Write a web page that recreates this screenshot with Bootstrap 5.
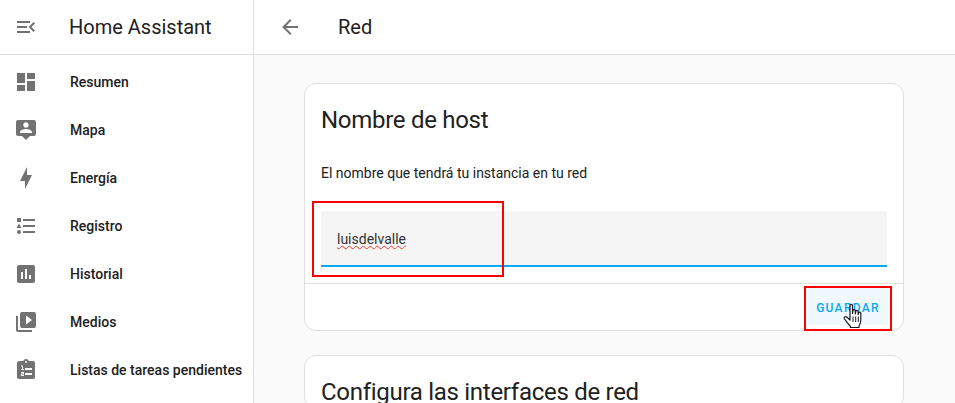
<!DOCTYPE html>
<html lang="es">
  <head>
    <meta charset="UTF-8" />
    <meta name="viewport" content="width=device-width, initial-scale=1.0" />
    <title>Red - Home Assistant</title>
    <link
      href="https://cdn.jsdelivr.net/npm/bootstrap@5.3.0/dist/css/bootstrap.min.css"
      rel="stylesheet"
    />
    <style>
      html,
      body {
        height: 100%;
        overflow: hidden;
      }
      body {
        font-family: Roboto, "Liberation Sans", sans-serif;
        color: #212121;
        background-color: #fafafa;
      }
      .ha-sidebar {
        width: 254px;
        background-color: #fff;
        border-right: 1px solid #e0e0e0;
      }
      .ha-head {
        height: 55px;
        background-color: #fff;
        border-bottom: 1px solid #e0e0e0;
      }
      .ha-head svg {
        width: 24px;
        height: 24px;
        fill: #727272;
      }
      .ha-brand {
        font-size: 20px;
        margin-left: 31px;
      }
      .ha-page-title {
        font-size: 20px;
        margin-left: 36px;
      }
      .ha-nav {
        padding-top: 3px;
      }
      .ha-nav a {
        height: 48px;
        padding-left: 14px;
        color: #212121;
        font-size: 14px;
        font-weight: 500;
        text-decoration: none;
      }
      .ha-nav svg {
        width: 24px;
        height: 24px;
        margin-right: 32px;
        fill: #727272;
      }
      .ha-main {
        padding: 28px 51px 0 50px;
      }
      .ha-card {
        width: 600px;
        border: 1px solid #e0e0e0;
        border-radius: 12px;
        background-color: #fff;
        margin-bottom: 24px;
      }
      .ha-card-title {
        font-size: 24px;
        font-weight: 400;
        letter-spacing: -0.012em;
        line-height: 32px;
        margin: 0;
        padding: 20px 16px 0;
      }
      .ha-desc {
        font-size: 14px;
        line-height: 20px;
        padding: 0 16px;
        margin: 27px 0 28px;
      }
      .ha-field {
        height: 56px;
        margin: 0 16px 16px;
        padding-left: 16px;
        padding-top: 18px;
        font-size: 14px;
        color: #333;
        background-color: #f5f5f5;
        border-bottom: 2px solid #03a9f4;
        border-radius: 4px 4px 0 0;
      }
      .ha-typo {
        text-decoration: underline wavy #e53935 1px;
        text-underline-offset: 1px;
      }
      .ha-actions {
        height: 47px;
        border-top: 1px solid #e0e0e0;
        padding: 4px 14px 0 0;
      }
      .ha-save {
        width: 82px;
        height: 37px;
        padding: 2px 0 0;
        border: 0;
        border-radius: 4px;
        background-color: #f0f9fe;
        color: #03a9f4;
        font-size: 12px;
        font-weight: 500;
        letter-spacing: 1.3px;
      }
      .ha-mark {
        border: 2px solid #f00;
        pointer-events: none;
      }
      .ha-mark-field {
        left: 7px;
        top: 117px;
        width: 192px;
        height: 76px;
      }
      .ha-mark-save {
        left: 499px;
        top: 202px;
        width: 88px;
        height: 45px;
      }
      .ha-cursor {
        left: 538px;
        top: 219px;
        width: 22px;
        height: 26px;
      }
    </style>
  </head>
  <body>
    <div class="d-flex h-100">
      <!-- Sidebar -->
      <nav class="ha-sidebar flex-shrink-0">
        <div class="ha-head d-flex align-items-center ps-3 pe-3">
          <svg class="flex-shrink-0" viewBox="0 0 24 24" style="margin-left: -2px"><path d="M21,15.61L19.59,17L14.58,12L19.59,7L21,8.39L17.44,12L21,15.61M3,6H16V8H3V6M3,13V11H13V13H3M3,18V16H16V18H3Z" /></svg>
          <span class="ha-brand">Home Assistant</span>
        </div>
        <div class="ha-nav d-flex flex-column">
          <a href="#" class="d-flex align-items-center">
            <svg viewBox="0 0 24 24"><path d="M13,3V9H21V3M13,21H21V11H13M3,21H11V15H3M3,13H11V3H3V13Z" /></svg>
            Resumen
          </a>
          <a href="#" class="d-flex align-items-center">
            <svg viewBox="0 0 24 24"><path d="M20 2H4C2.9 2 2 2.9 2 4V16C2 17.11 2.9 18 4 18H8L12 22L16 18H20C21.11 18 22 17.11 22 16V4C22 2.9 21.11 2 20 2M12 4.3C13.5 4.3 14.7 5.5 14.7 7C14.7 8.5 13.5 9.7 12 9.7C10.5 9.7 9.3 8.5 9.3 7C9.3 5.5 10.5 4.3 12 4.3M18 15H6V14.1C6 12.1 10 11 12 11C14 11 18 12.1 18 14.1V15Z" /></svg>
            Mapa
          </a>
          <a href="#" class="d-flex align-items-center">
            <svg viewBox="0 0 24 24"><path d="M11 15H6L13 1V9H18L11 23V15Z" /></svg>
            Energía
          </a>
          <a href="#" class="d-flex align-items-center">
            <svg viewBox="0 0 24 24"><path d="M5,9.5L7.5,14H2.5L5,9.5M3,4H7V8H3V4M5,20A2,2 0 0,0 7,18A2,2 0 0,0 5,16A2,2 0 0,0 3,18A2,2 0 0,0 5,20M9,5V7H21V5H9M9,19H21V17H9V19M9,13H21V11H9V13Z" /></svg>
            Registro
          </a>
          <a href="#" class="d-flex align-items-center">
            <svg viewBox="0 0 24 24"><path d="M19 3H5C3.9 3 3 3.9 3 5V19C3 20.1 3.9 21 5 21H19C20.1 21 21 20.1 21 19V5C21 3.9 20.1 3 19 3M9 17H7V10H9V17M13 17H11V7H13V17M17 17H15V13H17V17Z" /></svg>
            Historial
          </a>
          <a href="#" class="d-flex align-items-center">
            <svg viewBox="0 0 24 24"><path d="M4,6H2V20A2,2 0 0,0 4,22H18V20H4V6M20,2H8A2,2 0 0,0 6,4V16A2,2 0 0,0 8,18H20A2,2 0 0,0 22,16V4A2,2 0 0,0 20,2M12,14.5V5.5L18,10L12,14.5Z" /></svg>
            Medios
          </a>
          <a href="#" class="d-flex align-items-center">
            <svg viewBox="0 0 24 24"><path fill-rule="evenodd" d="M19,3A2,2 0 0,1 21,5V19A2,2 0 0,1 19,21H5A2,2 0 0,1 3,19V5A2,2 0 0,1 5,3H9.18C9.6,1.84 10.7,1 12,1C13.3,1 14.4,1.84 14.82,3H19M12,3A1,1 0 0,0 11,4A1,1 0 0,0 12,5A1,1 0 0,0 13,4A1,1 0 0,0 12,3M11,10V12H18V10H11M11,15V17H18V15H11M7,7.5V8.5H8V11H7V12H10V11H9V7.5H7M7,14V15H9V15.5H7V18H10V17H8V16.5H10V14H7Z" /></svg>
            Listas de tareas pendientes
          </a>
        </div>
      </nav>

      <!-- Main -->
      <div class="flex-grow-1 d-flex flex-column">
        <header class="ha-head d-flex align-items-center ps-4 flex-shrink-0">
          <svg class="flex-shrink-0" viewBox="0 0 24 24"><path d="M20,11V13H8L13.5,18.5L12.08,19.92L4.16,12L12.08,4.08L13.5,5.5L8,11H20Z" /></svg>
          <span class="ha-page-title">Red</span>
        </header>
        <main class="ha-main">
          <section class="ha-card position-relative">
            <h1 class="ha-card-title">Nombre de host</h1>
            <p class="ha-desc">El nombre que tendrá tu instancia en tu red</p>
            <div class="ha-field"><span class="ha-typo">luisdelvalle</span></div>
            <div class="ha-actions d-flex justify-content-end">
              <button type="button" class="ha-save">GUARDAR</button>
            </div>
            <!-- Annotations drawn over the screenshot -->
            <div class="ha-mark ha-mark-field position-absolute"></div>
            <div class="ha-mark ha-mark-save position-absolute"></div>
            <svg class="ha-cursor position-absolute" viewBox="0 0 22 26">
              <path
                d="M7 2.500C7 1 9.500 1 9.500 2.500V10.500L10 7.500C10.300 6.200 12.300 6.400 12.300 7.800V11L12.800 8.300C13.200 7 15.100 7.300 15.100 8.700V11.500L15.600 9.800C16 8.600 17.800 9 17.800 10.300V17C17.800 20 16.800 21.500 16 23V24.500H7.500V23.500C5.500 21.500 3.500 18.500 1.500 16C0.500 14.500 2.500 13 4 14.200L7 17V2.500Z"
                fill="#fff"
                stroke="#1a1a2a"
                stroke-width="1.200"
                stroke-linejoin="round"
              />
              <path d="M10 13.500V19M12.700 13.500V19M15.300 13.500V19" stroke="#1a1a2a" stroke-width="1" fill="none" />
            </svg>
          </section>
          <section class="ha-card">
            <h1 class="ha-card-title">Configura las interfaces de red</h1>
          </section>
        </main>
      </div>
    </div>
    <script src="https://cdn.jsdelivr.net/npm/bootstrap@5.3.0/dist/js/bootstrap.bundle.min.js"></script>
  </body>
</html>
